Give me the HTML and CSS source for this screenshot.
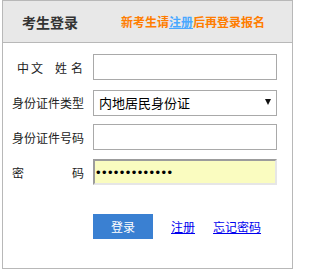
FILE: index.html
```html
<!DOCTYPE html>
<html lang="zh-CN">
<head>
<meta charset="utf-8">
<title>考生登录</title>
<link rel="stylesheet" href="styles.css">
</head>
<body>
<div class="login-box">
  <div class="login-head">
    <span class="head-title">考生登录</span>
    <span class="head-tip">新考生请<a href="#" class="tip-link">注册</a>后再登录报名</span>
  </div>
  <form class="login-form">
    <div class="form-row">
      <label class="form-label name-label"><span class="w1">中</span><span class="w2">文</span><span class="w3">姓</span><span>名</span></label>
      <input class="form-input" type="text">
    </div>
    <div class="form-row">
      <label class="form-label">身份证件类型</label>
      <div class="select-wrap">
        <select class="form-select">
          <option>内地居民身份证</option>
        </select>
      </div>
    </div>
    <div class="form-row">
      <label class="form-label">身份证件号码</label>
      <input class="form-input" type="text">
    </div>
    <div class="form-row">
      <label class="form-label pwd-label"><span>密</span><span>码</span></label>
      <input class="form-input pwd-input" type="password" value="1234567890123">
    </div>
    <div class="action-row">
      <button type="button" class="btn-login">登录</button>
      <a href="#" class="action-link">注册</a>
      <a href="#" class="action-link">忘记密码</a>
    </div>
  </form>
</div>
</body>
</html>
```
FILE: styles.css
```css
* { box-sizing: border-box; }
body {
  margin: 0;
  background: #fff;
  font-family: "Noto Sans CJK SC", "Liberation Sans", sans-serif;
  color: #222;
}
.login-box {
  margin-left: 2px;
  width: 291px;
  height: 269px;
  border: 1px solid #b8b8b8;
}
.login-head {
  height: 42px;
  background: #e8e8e8;
  border-bottom: 1px solid #b8b8b8;
  display: flex;
  align-items: center;
  padding-left: 19px;
  padding-top: 1px;
}
.head-title {
  font-size: 14px;
  font-weight: bold;
  color: #333;
  line-height: 1;
}
.head-tip {
  margin-left: 43px;
  font-size: 12px;
  font-weight: bold;
  color: #ff7d00;
  line-height: 1;
}
.tip-link {
  color: #4aa8ff;
  text-decoration: underline;
}
.login-form {
  padding: 11px 0 0 9px;
  display: flex;
  flex-direction: column;
  gap: 9px;
}
.form-row {
  display: flex;
  align-items: center;
  height: 26px;
}
.form-label {
  width: 72px;
  margin-right: 9px;
  font-size: 12px;
  color: #222;
  text-align: right;
  white-space: nowrap;
}
.name-label { padding-right: 1px; }
.name-label .w1 { margin-right: 2px; }
.name-label .w2 { margin-right: 12px; }
.name-label .w3 { margin-right: 4px; }
.pwd-label {
  display: flex;
  justify-content: space-between;
}
.form-input {
  width: 184px;
  height: 26px;
  border: 1px solid #a9a9a9;
  background: #fff;
  padding: 0 4px;
  font-size: 13px;
  font-family: inherit;
  outline: none;
}
.pwd-input {
  border-style: solid;
  border-width: 2px;
  border-color: #9c9c9c #e6e6e6 #e6e6e6 #9c9c9c;
  background: #fafcc0;
  padding-left: 1px;
  letter-spacing: 1.4px;
  font-family: "Liberation Sans", sans-serif;
  font-size: 13px;
  color: #000;
}
.select-wrap {
  position: relative;
  width: 184px;
  height: 26px;
}
.select-wrap::after {
  content: "";
  position: absolute;
  right: 6px;
  top: 10px;
  border-left: 3px solid transparent;
  border-right: 3px solid transparent;
  border-top: 6px solid #111;
  pointer-events: none;
}
.form-select {
  -webkit-appearance: none;
  appearance: none;
  width: 100%;
  height: 100%;
  border: 1px solid #a9a9a9;
  border-radius: 0;
  background: #fff;
  padding: 0 0 0 5px;
  font-size: 13px;
  font-family: inherit;
  color: #000;
  outline: none;
}
.action-row {
  margin-top: 20px;
  margin-left: 81px;
  display: flex;
  align-items: center;
}
.btn-login {
  width: 60px;
  height: 25px;
  border: none;
  background: #3a80d2;
  color: #fff;
  font-size: 12px;
  font-family: inherit;
  padding: 0;
  cursor: pointer;
}
.action-link {
  margin-left: 18px;
  font-size: 12px;
  color: #0000ee;
  text-decoration: underline;
}
```
